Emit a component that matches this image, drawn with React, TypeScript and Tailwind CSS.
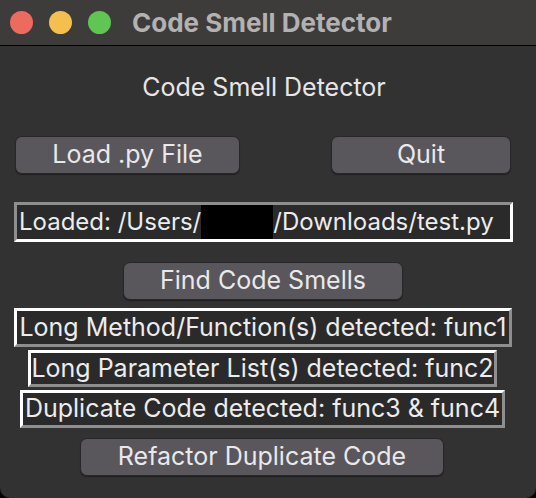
import React from 'react';

const font = { fontFamily: 'Inter, "Noto Sans", sans-serif' };

function MacButton({ label, className }: { label: string; className: string }) {
  return (
    <div
      className={
        'h-[38px] rounded-[7px] bg-[#59575c] border border-[#27272a] shadow-[0_1px_1px_rgba(0,0,0,0.4)] flex items-center justify-center text-[25px] text-[#e9e9ea] whitespace-nowrap ' +
        className
      }
    >
      {label}
    </div>
  );
}

function Sunken({ children, className }: { children: React.ReactNode; className: string }) {
  return (
    <div
      className={
        'bg-[#2a2a2a] border-t-[3px] border-l-[3px] border-b-[3px] border-r-[3px] border-t-[#8e8e8e] border-l-[#8e8e8e] border-b-white border-r-white flex items-center text-[24px] text-[#ececec] ' +
        className
      }
    >
      {children}
    </div>
  );
}

function Raised({ text, className }: { text: string; className: string }) {
  return (
    <div
      className={
        'bg-[#2a2a2a] border-t-[3px] border-l-[3px] border-b-[3px] border-r-[3px] border-t-white border-l-white border-b-[#8e8e8e] border-r-[#8e8e8e] flex items-center justify-center text-[25px] text-[#ececec] whitespace-nowrap ' +
        className
      }
    >
      {text}
    </div>
  );
}

export default function App() {
  return (
    <div className="w-[536px] h-[498px] bg-black" style={font}>
      <div className="w-full h-full bg-[#323232] rounded-b-[10px] overflow-hidden flex flex-col">
        <div className="h-[46px] bg-[#3d3c3b] border-b border-black flex items-center shrink-0">
          <div className="flex items-center gap-[16px] pl-[10px]">
            <span className="w-[23px] h-[23px] rounded-full bg-[#ec6a5e]" />
            <span className="w-[23px] h-[23px] rounded-full bg-[#f4bf4f]" />
            <span className="w-[23px] h-[23px] rounded-full bg-[#61c554]" />
          </div>
          <div className="ml-[21px] text-[26px] font-bold text-[#b3b2b1] leading-none">Code Smell Detector</div>
        </div>

        <div className="mt-[26px] h-[30px] leading-[30px] text-center text-[25px] text-[#e6e6e6] pr-[8px]">
          Code Smell Detector
        </div>

        <div className="mt-[34px] flex justify-between pl-[15px] pr-[25px]">
          <MacButton label="Load .py File" className="w-[225px]" />
          <MacButton label="Quit" className="w-[180px]" />
        </div>

        <Sunken className="mt-[28px] ml-[14px] w-[499px] h-[40px] pl-[2px] whitespace-nowrap">
          <span>Loaded: /Users/</span>
          <span className="inline-block w-[72px] h-[34px] bg-black" />
          <span>/Downloads/test.py</span>
        </Sunken>

        <MacButton label="Find Code Smells" className="mt-[20px] ml-[123px] w-[280px]" />

        <Raised text="Long Method/Function(s) detected: func1" className="mt-[8px] ml-[14px] w-[498px] h-[39px]" />
        <Raised text="Long Parameter List(s) detected: func2" className="mt-[3px] ml-[28px] w-[469px] h-[37px]" />
        <Raised text="Duplicate Code detected: func3 & func4" className="mt-[3px] ml-[20px] w-[485px] h-[38px]" />

        <MacButton label="Refactor Duplicate Code" className="mt-[10px] ml-[80px] w-[364px]" />
      </div>
    </div>
  );
}
